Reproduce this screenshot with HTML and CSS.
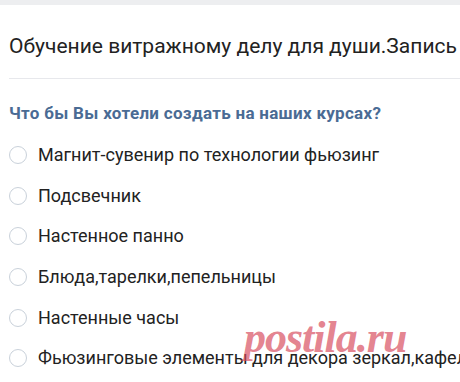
FILE: index.html
```html
<!DOCTYPE html>
<html lang="ru">
<head>
<meta charset="utf-8">
<link rel="stylesheet" href="styles.css">
</head>
<body>
<div class="page">
  <div class="topbar"></div>
  <div class="card">
    <h1 class="title">Обучение витражному делу для души.Запись на курсы</h1>
    <div class="sep"></div>
    <div class="question">Что бы Вы хотели создать на наших курсах?</div>
    <ul class="options">
      <li class="opt"><span class="radio"></span><span class="label">Магнит-сувенир по технологии фьюзинг</span></li>
      <li class="opt"><span class="radio"></span><span class="label">Подсвечник</span></li>
      <li class="opt"><span class="radio"></span><span class="label">Настенное панно</span></li>
      <li class="opt"><span class="radio"></span><span class="label">Блюда,тарелки,пепельницы</span></li>
      <li class="opt"><span class="radio"></span><span class="label">Настенные часы</span></li>
      <li class="opt"><span class="radio"></span><span class="label">Фьюзинговые элементы для декора зеркал,кафеля</span></li>
    </ul>
  </div>
  <div class="watermark">postila.ru</div>
</div>
</body>
</html>
```
FILE: styles.css
```css
* { box-sizing: border-box; }
html, body { margin: 0; padding: 0; background: #fff; }
body { font-family: Roboto, "Noto Sans", sans-serif; color: #000; }
.page { position: relative; width: 460px; height: 382px; overflow: hidden; }
.topbar { height: 5px; background: #edeef0; }
.card { padding: 0 0 0 9px; }
.title {
  margin: 0; padding-top: 27px;
  font-size: 21px; font-weight: 400; line-height: 28px;
  color: #222; white-space: nowrap; overflow: hidden;
}
.sep { height: 1px; background: #e7e8ec; margin-top: 18px; }
.question {
  margin-top: 24px;
  font-size: 17px; font-weight: 700; line-height: 20px; letter-spacing: 0.3px;
  color: #4a6b94; white-space: nowrap;
}
.options { list-style: none; margin: 12px 0 0; padding: 0; }
.opt { display: flex; align-items: center; height: 40.6px; }
.radio {
  flex: none; width: 18px; height: 18px; border-radius: 50%;
  border: 1.5px solid #c9d1da; margin-right: 11px;
}
.label {
  font-size: 18px; line-height: 22px; color: #222; white-space: nowrap;
}
.watermark {
  position: absolute; left: 244px; top: 310px;
  font-family: "Liberation Serif", serif; font-style: italic; font-weight: 700;
  font-size: 44px; line-height: 56px; letter-spacing: -1px;
  color: rgba(214, 70, 88, 0.68);
}
```
